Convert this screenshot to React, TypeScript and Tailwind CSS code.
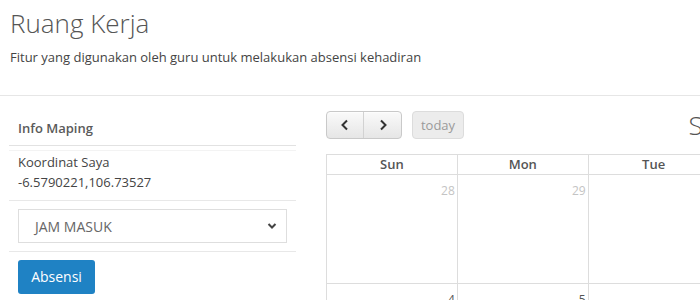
const days = ["Sun", "Mon", "Tue", "Wed", "Thu", "Fri", "Sat"];
const rows = [
  [
    { d: 28, other: true },
    { d: 29, other: true },
    { d: 30, other: true },
    { d: 31, other: true },
    { d: 1 },
    { d: 2 },
    { d: 3 },
  ],
  [{ d: 4 }, { d: 5 }, { d: 6 }, { d: 7 }, { d: 8 }, { d: 9 }, { d: 10 }],
];

function Calendar() {
  return (
    <div className="w-[917px] shrink-0">
      <div className="grid grid-cols-[1fr_auto_1fr] items-center h-[28px]">
        <div className="flex items-center">
          <div className="flex h-[28px] rounded-[4px] border border-[#c9c9c9] bg-gradient-to-b from-[#fafafa] to-[#e6e6e6] shadow-[inset_0_1px_0_rgba(255,255,255,0.6)]">
            <button className="w-[37px] flex items-center justify-center border-r border-[#d2d2d2] text-[#333]">
              <svg width="10" height="12" viewBox="0 0 10 12" fill="none">
                <path d="M7 1.5L2.5 6L7 10.5" stroke="#333" strokeWidth="2" />
              </svg>
            </button>
            <button className="w-[37px] flex items-center justify-center text-[#333]">
              <svg width="10" height="12" viewBox="0 0 10 12" fill="none">
                <path d="M3 1.5L7.5 6L3 10.5" stroke="#333" strokeWidth="2" />
              </svg>
            </button>
          </div>
          <button className="ml-[10px] h-[28px] w-[52px] rounded-[4px] border border-[#dcdcdc] bg-[#ececec] text-[13px] text-[#9a9a9a] leading-none">
            today
          </button>
        </div>
        <h2 className="pl-[4px] text-[26px] font-light text-[#555] leading-[28px]">September 2022</h2>
        <div />
      </div>
      <div className="mt-[15px] border-t border-l border-[#dddddd]">
        <div className="grid grid-cols-7">
          {days.map((d) => (
            <div
              key={d}
              className="h-[20px] border-r border-b border-[#dddddd] text-center text-[13px] font-semibold text-[#555] leading-[19px]"
            >
              {d}
            </div>
          ))}
        </div>
        {rows.map((r, i) => (
          <div key={i} className="grid grid-cols-7">
            {r.map((c) => (
              <div
                key={c.d}
                className="h-[109px] border-r border-b border-[#dddddd] text-right pr-[2px] pt-[2px]"
              >
                <span
                  className={
                    "text-[12px] leading-[16px] " +
                    (c.other ? "text-[#c4c4c4]" : "text-[#555]")
                  }
                >
                  {c.d}
                </span>
              </div>
            ))}
          </div>
        ))}
      </div>
    </div>
  );
}

export default function App() {
  return (
    <div
      className="w-[700px] h-[300px] overflow-hidden bg-white text-[#333]"
      style={{ fontFamily: '"Open Sans", "Liberation Sans", sans-serif' }}
    >
      <div className="px-[10px] pt-[5px] h-[95px]">
        <h1 className="text-[26px] font-light text-[#555] leading-[36px]">Ruang Kerja</h1>
        <p className="mt-[6px] text-[13px] leading-[20px] text-[#444]">
          Fitur yang digunakan oleh guru untuk melakukan absensi kehadiran
        </p>
      </div>
      <div className="border-t border-[#e6e6e6]" />
      <div className="flex">
        <div className="ml-[9px] w-[287px] shrink-0 mt-[14px]">
          <div className="px-[9px] pt-[8px] pb-[7px] border-b border-[#e2e2e2] text-[13px] font-semibold text-[#5a5a5a] leading-[20px]">
            Info Maping
          </div>
          <div className="mt-[4px] border-t border-[#f3f3f3] pt-[1px] pb-[8px] px-[9px] text-[13px] leading-[20px] text-[#444]">
            <div>Koordinat Saya</div>
            <div>-6.5790221,106.73527</div>
          </div>
          <div className="border-t border-[#e8e8e8] px-[9px] py-[8px] border-b">
            <div className="h-[34px] border border-[#dedede] flex items-center justify-between pl-[16px] pr-[9px] text-[14px] text-[#666]">
              <span>JAM MASUK</span>
              <svg width="10" height="8" viewBox="0 0 10 8" fill="none">
                <path d="M1.5 2L5 5.5L8.5 2" stroke="#444" strokeWidth="2" />
              </svg>
            </div>
          </div>
          <div className="px-[9px] pt-[8px]">
            <button className="h-[34px] w-[77px] rounded-[3px] bg-[#1f82c4] text-white text-[14px] leading-none">
              Absensi
            </button>
          </div>
        </div>
        <div className="ml-[30px] mt-[15px]">
          <Calendar />
        </div>
      </div>
    </div>
  );
}
